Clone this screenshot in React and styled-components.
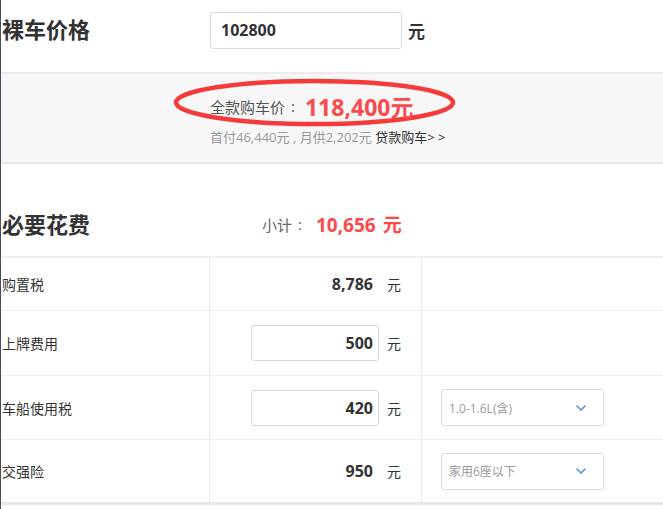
import React from 'react'
import styled, { createGlobalStyle } from 'styled-components'

const GlobalStyle = createGlobalStyle`
  body {
    margin: 0;
    background: #fff;
    font-family: "Open Sans", "Noto Sans CJK SC", sans-serif;
    color: #333;
  }
`

const rows = [
  { label: '购置税', value: '8,786', input: false, height: 52 },
  { label: '上牌费用', value: '500', input: true, height: 64 },
  { label: '车船使用税', value: '420', input: true, height: 63, select: '1.0-1.6L(含)' },
  { label: '交强险', value: '950', input: false, height: 62, select: '家用6座以下' },
]

const App = () => {
  return (
    <>
      <GlobalStyle />
      <Page>
        <PriceRow>
          <Title>裸车价格</Title>
          <PriceInput>102800</PriceInput>
          <BigUnit>元</BigUnit>
        </PriceRow>

        <Summary>
          <Ring width="285" height="51" viewBox="0 0 285 51">
            <ellipse cx="142.5" cy="25.5" rx="138.5" ry="21.5" fill="none" stroke="#f53a3a" strokeWidth="4.5" />
          </Ring>
          <TotalLine>
            全款购车价<Colon space={10}>:</Colon>
            <TotalValue>118,400元</TotalValue>
          </TotalLine>
          <SubLine>
            首付46,440元 , 月供2,202元 <LoanLink>贷款购车&gt; &gt;</LoanLink>
          </SubLine>
        </Summary>

        <SectionHead>
          <SectionTitle>必要花费</SectionTitle>
          <Subtotal>
            小计<Colon space={14}>:</Colon>
            <SubtotalValue>10,656 元</SubtotalValue>
          </Subtotal>
        </SectionHead>

        <Table>
          {rows.map((row) => (
            <Row key={row.label} height={row.height}>
              <LabelCell>{row.label}</LabelCell>
              <ValueCell>
                <ValueBox boxed={row.input}>{row.value}</ValueBox>
                <Unit>元</Unit>
              </ValueCell>
              <OptionCell>
                {row.select && (
                  <Select>
                    <span>{row.select}</span>
                    <svg width="12" height="8" viewBox="0 0 12 8">
                      <path d="M1.5 1.5 L6 6 L10.5 1.5" fill="none" stroke="#5b95e0" strokeWidth="1.6" />
                    </svg>
                  </Select>
                )}
              </OptionCell>
            </Row>
          ))}
        </Table>
      </Page>
    </>
  )
}

export default App

const Page = styled.div`
  width: 662px;
  height: 509px;
  border-left: 1px solid #46505c;
  background: #fff;
  overflow: hidden;
`

const PriceRow = styled.div`
  display: flex;
  align-items: center;
  height: 60px;
  padding-bottom: 12px;
`

const Title = styled.div`
  width: 208px;
  padding-left: 1px;
  padding-bottom: 5px;
  font-size: 22px;
  font-weight: 700;
  color: #333;
`

const PriceInput = styled.div`
  box-sizing: border-box;
  width: 192px;
  height: 37px;
  padding-left: 10px;
  border: 1px solid #dcdcdc;
  border-radius: 3px;
  display: flex;
  align-items: center;
  font-size: 16px;
  font-weight: 700;
  color: #333;
`

const BigUnit = styled.span`
  margin-left: 6px;
  font-size: 17px;
  font-weight: 700;
`

const Summary = styled.div`
  position: relative;
  box-sizing: border-box;
  height: 92px;
  padding: 18px 0 0 209px;
  border-top: 2px solid #ececec;
  border-bottom: 2px solid #e6e6e6;
  background: #f7f7f7;
`

const Ring = styled.svg`
  position: absolute;
  left: 171px;
  top: 3px;
`

const TotalLine = styled.div`
  position: relative;
  height: 28px;
  display: flex;
  align-items: center;
  font-size: 15px;
  color: #555;
`

const Colon = styled.span`
  margin: 0 ${(props) => props.space}px 0 6px;
`

const TotalValue = styled.span`
  font-size: 23px;
  font-weight: 700;
  color: #fb4a4d;
`

const SubLine = styled.div`
  margin-top: 8px;
  line-height: 18px;
  font-size: 13px;
  color: #999;
`

const LoanLink = styled.span`
  color: #333;
`

const SectionHead = styled.div`
  display: flex;
  align-items: center;
  height: 44px;
  padding: 38px 0 10px;
`

const SectionTitle = styled.div`
  width: 260px;
  padding-left: 1px;
  padding-bottom: 2px;
  font-size: 22px;
  font-weight: 700;
`

const Subtotal = styled.div`
  display: flex;
  align-items: center;
  font-size: 15px;
  color: #666;
`

const SubtotalValue = styled.span`
  font-size: 19px;
  font-weight: 700;
  color: #fb4a4d;
  word-spacing: 2px;
`

const Table = styled.div`
  border-top: 2px solid #efefef;
  border-bottom: 3px solid #e6e6e6;
`

const Row = styled.div`
  display: grid;
  grid-template-columns: 209px 212px 1fr;
  height: ${(props) => props.height}px;
  & + & {
    border-top: 1px solid #efefef;
  }
`

const LabelCell = styled.div`
  display: flex;
  align-items: center;
  padding-left: 1px;
  font-size: 14px;
  color: #333;
  border-right: 1px solid #ececec;
`

const ValueCell = styled.div`
  display: flex;
  align-items: center;
  justify-content: flex-end;
  padding-right: 20px;
  border-right: 1px solid #ececec;
`

const ValueBox = styled.div`
  box-sizing: border-box;
  width: 128px;
  height: 36px;
  padding-right: 5px;
  display: flex;
  align-items: center;
  justify-content: flex-end;
  border: 1px solid ${(props) => (props.boxed ? '#d9d9d9' : 'transparent')};
  border-radius: 3px;
  font-size: 16px;
  font-weight: 700;
  color: #333;
`

const Unit = styled.span`
  width: 14px;
  margin-left: 8px;
  font-size: 14px;
  color: #333;
`

const OptionCell = styled.div`
  display: flex;
  align-items: center;
  padding-left: 19px;
`

const Select = styled.div`
  box-sizing: border-box;
  width: 163px;
  height: 37px;
  padding: 0 16px 0 7px;
  display: flex;
  align-items: center;
  justify-content: space-between;
  border: 1px solid #dcdcdc;
  border-radius: 3px;
  font-size: 12px;
  color: #999;
`
